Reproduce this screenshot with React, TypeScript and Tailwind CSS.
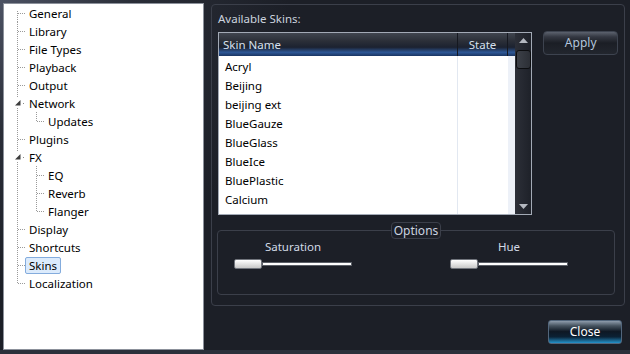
import React from 'react';

type Node = { label: string; level: 0 | 1; expand?: boolean; first?: boolean; last?: boolean; selected?: boolean };

const TREE: Node[] = [
  { label: 'General', level: 0, first: true },
  { label: 'Library', level: 0 },
  { label: 'File Types', level: 0 },
  { label: 'Playback', level: 0 },
  { label: 'Output', level: 0 },
  { label: 'Network', level: 0, expand: true },
  { label: 'Updates', level: 1, last: true },
  { label: 'Plugins', level: 0 },
  { label: 'FX', level: 0, expand: true },
  { label: 'EQ', level: 1 },
  { label: 'Reverb', level: 1 },
  { label: 'Flanger', level: 1, last: true },
  { label: 'Display', level: 0 },
  { label: 'Shortcuts', level: 0 },
  { label: 'Skins', level: 0, selected: true },
  { label: 'Localization', level: 0, last: true },
];

const SKINS = ['Acryl', 'Beijing', 'beijing ext', 'BlueGauze', 'BlueGlass', 'BlueIce', 'BluePlastic', 'Calcium'];

const dot = { stroke: '#9a9a9a', strokeWidth: 1, strokeDasharray: '1 1', shapeRendering: 'crispEdges' as const };

// tree lines, coords relative to the panel's inner edge (x=4 on the page)
function Connector({ node }: { node: Node }) {
  if (node.level === 1) {
    return (
      <svg width="40" height="18" className="shrink-0">
        <line x1="13.5" y1="0" x2="13.5" y2="18" {...dot} />
        <line x1="32.5" y1="0" x2="32.5" y2={node.last ? 10 : 18} {...dot} />
        <line x1="33" y1="9.5" x2="41" y2="9.5" {...dot} />
      </svg>
    );
  }
  return (
    <svg width="21" height="18" className="shrink-0">
      {node.expand ? (
        <>
          <line x1="13.5" y1="0" x2="13.5" y2="4" {...dot} />
          <line x1="13.5" y1="14" x2="13.5" y2="18" {...dot} />
          <polygon points="16.5,6 16.5,11.5 11,11.5" fill="#3c3c3c" />
          <rect x="19" y="9" width="1" height="1" fill="#8a8a8a" />
        </>
      ) : (
        <>
          <line x1="13.5" y1={node.first ? 7 : 0} x2="13.5" y2={node.last ? 10 : 18} {...dot} />
          <line x1="14" y1="9.5" x2="22" y2="9.5" {...dot} />
        </>
      )}
    </svg>
  );
}

function Slider({ label }: { label: string }) {
  return (
    <div className="flex w-[118px] flex-col items-center">
      <div className="text-[11.5px] leading-[16px] text-[#d2dae6]">{label}</div>
      <div className="mt-[4px] flex w-full items-center">
        <div className="h-[10px] w-[28px] rounded-[2px] border border-[#70747c] bg-[linear-gradient(to_bottom,#ffffff,#e4e4e4_50%,#c8c8c8)]" />
        <div className="h-[4px] flex-1 border border-[#5a5e66] bg-white" />
      </div>
    </div>
  );
}

export default function App() {
  return (
    <div
      className="flex h-[354px] w-[630px] flex-col overflow-hidden bg-[#1c1f27] bg-[radial-gradient(circle_at_0%_0%,#4c5263_0%,#2a2e38_18%,#1c1f27_40%)]"
      style={{ fontFamily: '"Noto Sans", "Open Sans", sans-serif' }}
    >
      <div className="flex h-[350px]">
        {/* tree */}
        <div className="ml-[3px] mt-[3px] h-[347px] w-[201px] border border-[#8c919b] bg-white">
          {TREE.map((n) => (
            <div key={n.label} className="flex h-[18px] items-center">
              <Connector node={n} />
              <span
                className={
                  'rounded-[2px] border px-[3px] text-[11.5px] leading-[15px] text-black ' +
                  (n.selected ? 'border-[#84acdd] bg-[#dcebfc]' : 'border-transparent')
                }
              >
                {n.label}
              </span>
            </div>
          ))}
        </div>

        {/* right side */}
        <div className="ml-[7px] mt-[4px] flex w-[414px] flex-col">
          <div className="flex h-[302px] flex-col rounded-[4px] border border-[#3b3f4a] px-[6px] pt-[6px]">
            <div className="text-[11.5px] leading-[16px] text-[#cbd3df]">Available Skins:</div>
            <div className="mt-[5px] flex">
              <div className="flex h-[183px] w-[316px] border border-[#a3aab6] bg-white">
                <div className="flex w-[296px] flex-col">
                  <div className="flex h-[23px] bg-[linear-gradient(to_bottom,#40454f_0%,#2b2f38_35%,#1c2230_62%,#2d5796_84%,#1a3562_100%)] text-[11.5px] leading-[23px] text-[#d6e0ee]">
                    <div className="w-[239px] border-r border-[#151820] pl-[4px]">Skin Name</div>
                    <div className="w-[50px] border-r border-[#151820] text-center">State</div>
                    <div className="flex-1" />
                  </div>
                  <div className="flex flex-1">
                    <div className="w-[239px] border-r border-[#e2e8f1] pt-[1px]">
                      {SKINS.map((s) => (
                        <div key={s} className="h-[19px] pl-[6px] text-[11.5px] leading-[19px] text-black">
                          {s}
                        </div>
                      ))}
                    </div>
                    <div className="w-[50px]" />
                    <div className="flex-1 bg-[#edf1f8]" />
                  </div>
                </div>
                <div className="flex flex-1 flex-col items-center bg-[linear-gradient(to_right,#2c2f38,#1e2129)] py-[5px]">
                  <svg width="9" height="5"><polygon points="4.5,0 9,5 0,5" fill="#b4b8c0" /></svg>
                  <div className="mt-[7px] h-[19px] w-[15px] rounded-[3px] border border-[#0c0d10] bg-[linear-gradient(to_right,#3c4048,#2c2f36)]" />
                  <div className="flex-1" />
                  <svg width="9" height="5"><polygon points="0,0 9,0 4.5,5" fill="#b4b8c0" /></svg>
                </div>
              </div>
              <button
                type="button"
                className="ml-[11px] mt-[-1px] h-[24px] w-[75px] rounded-[4px] border border-[#3d434f] bg-[linear-gradient(to_bottom,#5c626e_0%,#343842_22%,#1b1e25_50%,#22262e_100%)] text-[12px] leading-[22px] text-[#b3c6dd]"
              >
                Apply
              </button>
            </div>
            <div className="relative ml-[-1px] mt-[15px] flex h-[65px] w-[398px] gap-[98px] rounded-[4px] border border-[#3b3f4a] pl-[16px] pt-[8px]">
              <div className="absolute left-1/2 top-[-9px] h-[17px] w-[50px] -translate-x-1/2 rounded-[4px] border border-[#3b3f4a] bg-[#1c1f27] text-center text-[12px] leading-[15px] text-[#ccd4e0]">
                Options
              </div>
              <Slider label="Saturation" />
              <Slider label="Hue" />
            </div>
          </div>
          <div className="mr-[3px] mt-[14px] flex justify-end">
            <button
              type="button"
              className="h-[24px] w-[74px] rounded-[3px] border border-[#52667c] bg-[linear-gradient(to_bottom,#8e9cac_0%,#46535f_22%,#0e1824_48%,#0b2134_72%,#2392cb_100%)] text-[12px] leading-[22px] text-white"
            >
              Close
            </button>
          </div>
        </div>
      </div>
      <div className="h-[4px] bg-[#2b303b]" />
    </div>
  );
}
